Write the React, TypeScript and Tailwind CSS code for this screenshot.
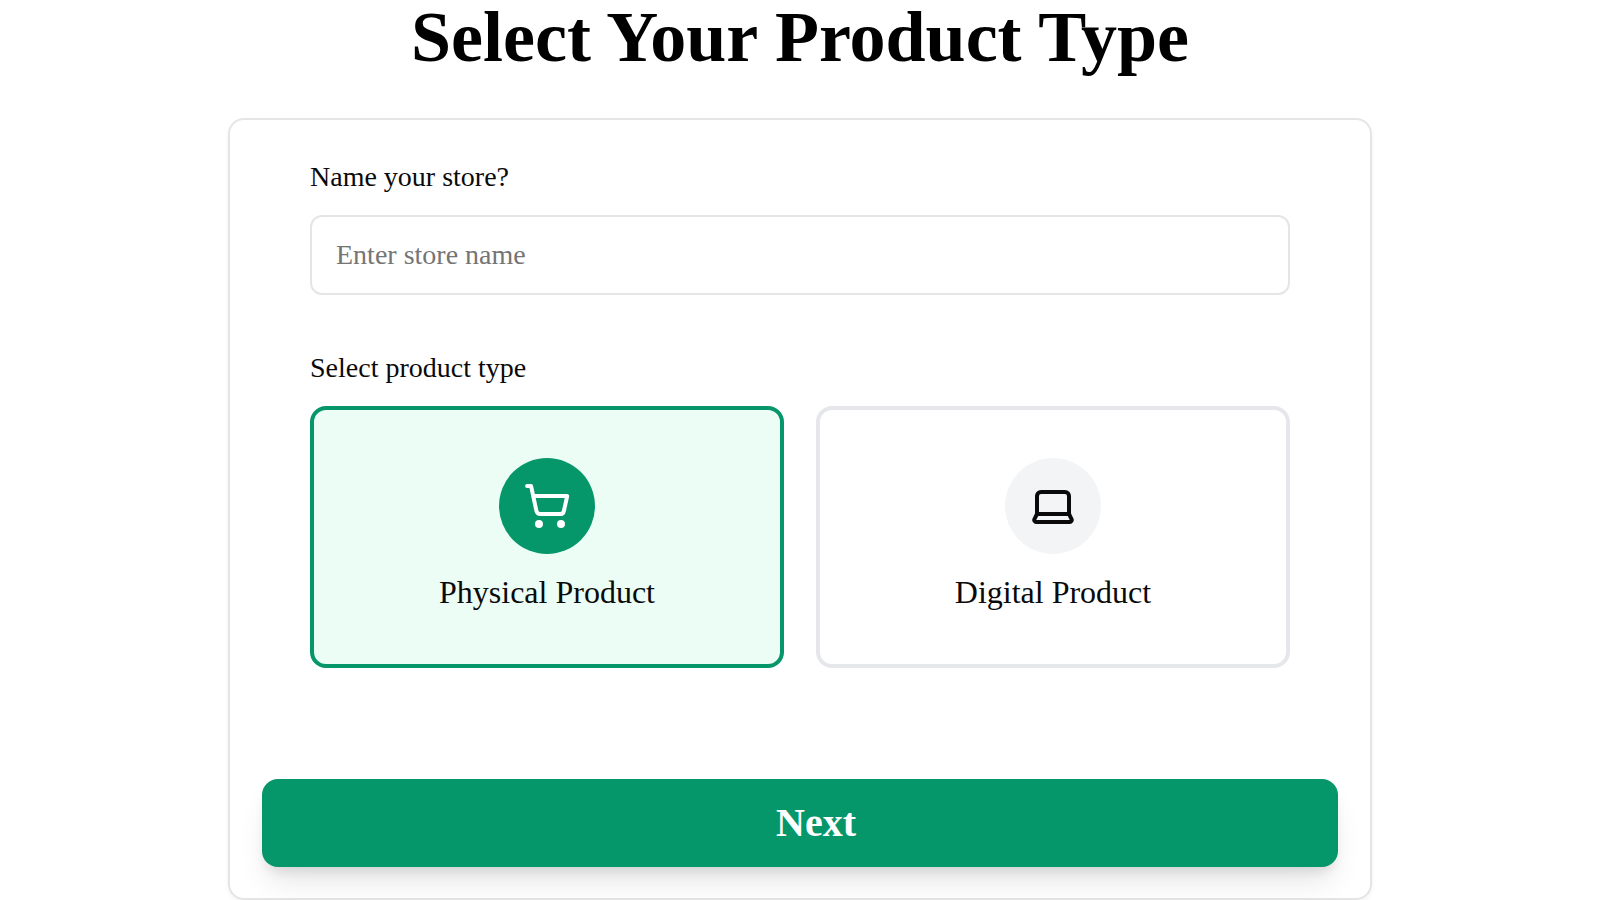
import { useState } from 'react';
import { Laptop, ShoppingCart } from 'lucide-react';

const productTypes = [
  { id: 'physical', label: 'Physical Product', Icon: ShoppingCart },
  { id: 'digital', label: 'Digital Product', Icon: Laptop },
];

export default function App() {
  const [selected, setSelected] = useState('physical');

  return (
    <main className="min-h-screen bg-white px-6 font-['Liberation_Serif',serif] text-black">
      <h1 className="text-center text-[72px] leading-[74px] font-bold">Select Your Product Type</h1>
      <form
        className="mx-auto mt-11 max-w-[1144px] rounded-2xl border-2 border-[#e5e5e5] px-8 pt-10 pb-[31px] text-[#0a0a0a] shadow-[0_2px_4px_rgba(0,0,0,0.05)]"
        onSubmit={(event) => event.preventDefault()}
      >
        <div className="px-12">
          <label htmlFor="store-name" className="block text-[28px] leading-[34px]">
            Name your store?
          </label>
          <input
            id="store-name"
            type="text"
            placeholder="Enter store name"
            className="mt-[21px] block h-20 w-full rounded-xl border-2 border-[#e5e5e5] px-6 text-[28px] placeholder:text-[#757575]"
          />
          <fieldset className="mt-14">
            <legend className="text-[28px] leading-[34px]">Select product type</legend>
            <div className="mt-[21px] grid grid-cols-2 gap-8">
              {productTypes.map(({ id, label, Icon }) => {
                const active = selected === id;
                return (
                  <button
                    key={id}
                    type="button"
                    aria-pressed={active}
                    onClick={() => setSelected(id)}
                    className={`flex h-[262px] flex-col items-center rounded-2xl border-4 pt-12 ${
                      active ? 'border-[#059669] bg-[#ecfdf5]' : 'border-[#e5e7eb] bg-white'
                    }`}
                  >
                    <span
                      className={`flex size-24 items-center justify-center rounded-full ${
                        active ? 'bg-[#059669] text-white' : 'bg-[#f3f4f6] text-[#0a0a0a]'
                      }`}
                    >
                      <Icon className="size-12" />
                    </span>
                    <span className="mt-4 text-[32px] leading-[44px]">{label}</span>
                  </button>
                );
              })}
            </div>
          </fieldset>
        </div>
        <button
          type="submit"
          className="mt-[111px] block h-[88px] w-full rounded-2xl bg-[#059669] pl-8 text-[40px] leading-[56px] font-bold text-white shadow-[0_20px_30px_-6px_rgba(0,0,0,0.1),0_8px_12px_-4px_rgba(0,0,0,0.1)]"
        >
          Next
        </button>
      </form>
    </main>
  );
}
